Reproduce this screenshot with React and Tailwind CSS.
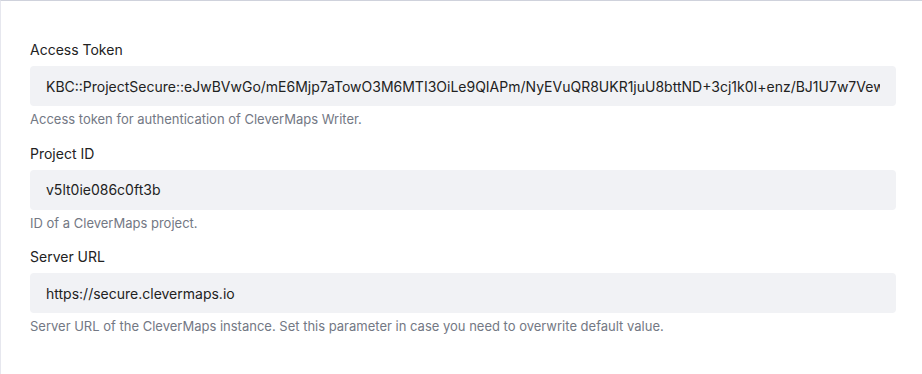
const fields = [
  {
    label: 'Access Token',
    value:
      'KBC::ProjectSecure::eJwBVwGo/mE6Mjp7aTowO3M6MTI3OiLe9QIAPm/NyEVuQR8UKR1juU8bttND+3cj1k0I+enz/BJ1U7w7VewqK3nQ9x==',
    help: 'Access token for authentication of CleverMaps Writer.',
  },
  {
    label: 'Project ID',
    value: 'v5lt0ie086c0ft3b',
    help: 'ID of a CleverMaps project.',
  },
  {
    label: 'Server URL',
    value: 'https://secure.clevermaps.io',
    help: 'Server URL of the CleverMaps instance. Set this parameter in case you need to overwrite default value.',
  },
];

function Field({ label, value, help }) {
  return (
    <div className="flex flex-col">
      <label className="text-sm leading-5 text-[#222]">{label}</label>
      <input
        readOnly
        value={value}
        className="mt-1.5 h-10 w-full rounded bg-[#f1f2f5] px-4 text-sm text-[#222] outline-none"
      />
      <p className="mt-1 text-[13px] leading-[19px] text-[#737884]">{help}</p>
    </div>
  );
}

export default function App() {
  return (
    <div
      className="h-[374px] w-full border-t border-l border-t-[#cfd2dc] border-l-[#e6e7ee] bg-white pt-[39px] pl-[29px] pr-[26px]"
      style={{ fontFamily: 'Inter, "Noto Sans", sans-serif' }}
    >
      <div className="flex flex-col gap-[14.5px]">
        {fields.map((f) => (
          <Field key={f.label} {...f} />
        ))}
      </div>
    </div>
  );
}
